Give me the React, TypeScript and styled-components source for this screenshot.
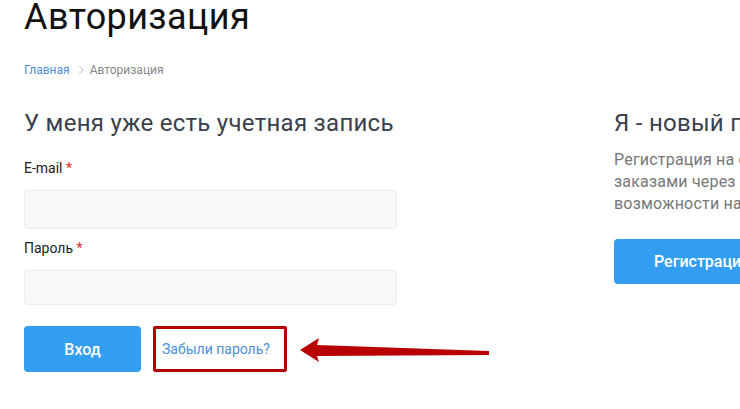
import React from 'react';
import styled, { createGlobalStyle } from 'styled-components';

const GlobalStyle = createGlobalStyle`
  html, body {
    margin: 0;
    padding: 0;
    background: #fff;
    overflow: hidden;
  }
  body {
    font-family: Roboto, 'Noto Sans', Arial, sans-serif;
    color: #222;
  }
`;

const Page = styled.div`
  position: relative;
  width: 740px;
  height: 409px;
  padding-left: 24px;
  box-sizing: border-box;
  overflow: hidden;
`;

const Title = styled.h1`
  margin: 0;
  font-size: 36px;
  line-height: 35px;
  letter-spacing: 0.4px;
  font-weight: 400;
  color: #111;
`;

const Breadcrumbs = styled.div`
  margin-top: 27px;
  display: flex;
  align-items: center;
  font-size: 12px;
  line-height: 16px;
  color: #888;
`;

const Crumb = styled.a`
  color: #4a8fd4;
  text-decoration: none;
`;

const Chevron = styled.span`
  display: inline-flex;
  margin: 0 6px 0 8px;
  color: #c4c4c4;
`;

const Columns = styled.div`
  display: flex;
  margin-top: 31px;
  gap: 217px;
`;

const LeftCol = styled.div`
  width: 373px;
  flex-shrink: 0;
`;

const RightCol = styled.div`
  width: 420px;
  flex-shrink: 0;
`;

const Heading = styled.h2`
  margin: 0;
  font-size: 24px;
  line-height: 28px;
  letter-spacing: 0.27px;
  font-weight: 400;
  color: #3b404b;
  white-space: nowrap;
`;

const Label = styled.div<{ $top: number }>`
  margin-top: ${(p) => p.$top}px;
  font-size: 14px;
  line-height: 20px;
  color: #222;
`;

const Required = styled.span`
  color: #e12a2a;
`;

const Input = styled.input<{ $h: number }>`
  display: block;
  margin-top: 12px;
  width: 100%;
  height: ${(p) => p.$h}px;
  box-sizing: border-box;
  border: 1px solid #ececec;
  border-radius: 4px;
  background: #f8f8f8;
  outline: none;
`;

const Actions = styled.div`
  display: flex;
  align-items: center;
  margin-top: 21px;
  gap: 12px;
`;

const Button = styled.button<{ $w?: number }>`
  height: 46px;
  width: ${(p) => (p.$w ? `${p.$w}px` : 'auto')};
  padding: 0 40px;
  border: none;
  border-radius: 4px;
  background: #339df0;
  color: #fff;
  font-family: Roboto, 'Noto Sans', Arial, sans-serif;
  font-size: 16px;
  font-weight: 500;
  white-space: nowrap;
  cursor: pointer;
`;

const Highlight = styled.div`
  width: 134px;
  height: 46px;
  box-sizing: border-box;
  border: 3px solid #b30000;
  border-radius: 2px;
  display: flex;
  align-items: center;
  padding-left: 6px;
`;

const Link = styled.a`
  font-size: 14px;
  color: #4a8fd4;
  text-decoration: none;
`;

const Paragraph = styled.p`
  margin: 12px 0 0;
  font-size: 16px;
  line-height: 22px;
  letter-spacing: 0.2px;
  color: #777;
  white-space: nowrap;
`;

const RegisterButton = styled(Button)`
  margin-top: 24px;
  height: 45px;
`;

const Arrow = styled.svg`
  position: absolute;
  left: 0;
  top: 0;
  pointer-events: none;
`;

export default function App() {
  return (
    <Page>
      <GlobalStyle />
      <Title>Авторизация</Title>
      <Breadcrumbs>
        <Crumb href="#">Главная</Crumb>
        <Chevron>
          <svg width="6" height="10" viewBox="0 0 6 10">
            <path d="M1 1l4 4-4 4" fill="none" stroke="currentColor" strokeWidth="1" />
          </svg>
        </Chevron>
        <span>Авторизация</span>
      </Breadcrumbs>
      <Columns>
        <LeftCol>
          <Heading>У меня уже есть учетная запись</Heading>
          <Label $top={21}>
            E-mail <Required>*</Required>
          </Label>
          <Input $h={39} type="text" />
          <Label $top={9}>
            Пароль <Required>*</Required>
          </Label>
          <Input $h={35} type="password" />
          <Actions>
            <Button $w={117}>Вход</Button>
            <Highlight>
              <Link href="#">Забыли пароль?</Link>
            </Highlight>
          </Actions>
        </LeftCol>
        <RightCol>
          <Heading>Я - новый покупатель</Heading>
          <Paragraph>
            Регистрация на сайте позволяет получить доступ к управлению
            <br />
            заказами через личный кабинет и использовать все
            <br />
            возможности нашего интернет-магазина.
          </Paragraph>
          <RegisterButton>Регистрация</RegisterButton>
        </RightCol>
      </Columns>
      <Arrow width="740" height="409" viewBox="0 0 740 409">
        <path
          d="M300 350 L319 338 L317 345 L489 351 L489 355 L317 356 L319 362 Z"
          fill="#b80000"
        />
      </Arrow>
    </Page>
  );
}
